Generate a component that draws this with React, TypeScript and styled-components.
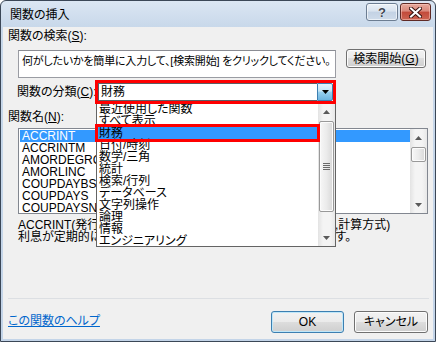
import React from 'react'
import styled, { createGlobalStyle, css } from 'styled-components'

const categories = [
  '最近使用した関数',
  'すべて表示',
  '財務',
  '日付/時刻',
  '数学/三角',
  '統計',
  '検索/行列',
  'データベース',
  '文字列操作',
  '論理',
  '情報',
  'エンジニアリング',
]

const functionNames = ['ACCRINT', 'ACCRINTM', 'AMORDEGRC', 'AMORLINC', 'COUPDAYBS', 'COUPDAYS', 'COUPDAYSNC', 'COUPNCD']

function ScrollBar({ thumbTop, thumbHeight }: { thumbTop: number; thumbHeight: number }) {
  return (
    <Bar>
      <ArrowButton>
        <svg width="7" height="4" viewBox="0 0 7 4">
          <path d="M0 4 L3.5 0 L7 4 Z" fill="#5a5a5a" />
        </svg>
      </ArrowButton>
      <Track>
        <Thumb style={{ marginTop: thumbTop, height: thumbHeight }}>
          {thumbHeight > 30 && <Grip />}
        </Thumb>
      </Track>
      <ArrowButton>
        <svg width="7" height="4" viewBox="0 0 7 4">
          <path d="M0 0 L7 0 L3.5 4 Z" fill="#5a5a5a" />
        </svg>
      </ArrowButton>
    </Bar>
  )
}

function App() {
  return (
    <>
      <GlobalStyle />
      <Window>
        <TitleBar>
          <Title>関数の挿入</Title>
          <CaptionButton $kind="help">
            <HelpGlyph>?</HelpGlyph>
          </CaptionButton>
          <CaptionButton $kind="close">
            <svg width="13" height="11" viewBox="0 0 13 11">
              <path d="M2 1.5 L11 9.5 M11 1.5 L2 9.5" stroke="#3b1512" strokeWidth="4" strokeLinecap="square" />
              <path d="M2 1.5 L11 9.5 M11 1.5 L2 9.5" stroke="#ffffff" strokeWidth="2" strokeLinecap="square" />
            </svg>
          </CaptionButton>
        </TitleBar>

        <Client>
          <Label>
            関数の検索(<u>S</u>):
          </Label>
          <SearchRow>
            <SearchBox>何がしたいかを簡単に入力して、[検索開始] をクリックしてください。</SearchBox>
            <Button $width={80} $height={19}>
              検索開始(<u>G</u>)
            </Button>
          </SearchRow>

          <CategoryRow>
            <CategoryLabel>
              関数の分類(<u>C</u>):
            </CategoryLabel>
            <ComboWrap>
              <Combo>
                <ComboValue>財務</ComboValue>
                <ComboButton>
                  <svg width="7" height="4" viewBox="0 0 7 4">
                    <path d="M0 0 L7 0 L3.5 4 Z" fill="#000" />
                  </svg>
                </ComboButton>
              </Combo>
              <DropList>
                <DropItems>
                  {categories.map((c) => (
                    <DropItem key={c} $selected={c === '財務'}>
                      {c}
                    </DropItem>
                  ))}
                </DropItems>
                <ScrollBar thumbTop={1} thumbHeight={91} />
              </DropList>
            </ComboWrap>
          </CategoryRow>

          <Label $top={6}>
            関数名(<u>N</u>):
          </Label>
          <FunctionList>
            <FunctionItems>
              {functionNames.map((f, i) => (
                <FunctionItem key={f} $selected={i === 0}>
                  {f}
                </FunctionItem>
              ))}
            </FunctionItems>
            <ScrollBar thumbTop={1} thumbHeight={15} />
          </FunctionList>

          <Description>
            <DescLine>ACCRINT(発行日,最初の利払日,受渡日,利率,額面,頻度,基準,計算方式)</DescLine>
            <DescLine>利息が定期的に支払われる有価証券の未収利息額を計算します。</DescLine>
          </Description>

          <Separator />

          <Footer>
            <HelpLink href="#">この関数のヘルプ</HelpLink>
            <Buttons>
              <Button $width={73} $height={22} $default>
                OK
              </Button>
              <Button $width={74} $height={22}>
                キャンセル
              </Button>
            </Buttons>
          </Footer>
        </Client>
      </Window>
    </>
  )
}

export default App

const GlobalStyle = createGlobalStyle`
  html, body {
    margin: 0;
    padding: 0;
    background: #ffffff;
  }
  body {
    font-family: 'Liberation Sans', 'Noto Sans CJK JP', sans-serif;
    font-size: 12px;
    color: #000;
    font-feature-settings: 'palt' 1;
  }
  * {
    box-sizing: border-box;
  }
`

const Window = styled.div`
  width: 436px;
  height: 342px;
  border: 1px solid #3b4757;
  border-radius: 6px 6px 0 0;
  background: linear-gradient(#dbe6f3 0, #c8d8ea 26px, #c3d4e8 100%);
  padding: 0 2px 2px 2px;
  display: flex;
  flex-direction: column;
  overflow: hidden;
`

const TitleBar = styled.div`
  height: 26px;
  display: flex;
  align-items: flex-start;
  padding: 2px 2px 0 7px;
`

const Title = styled.div`
  flex: 1;
  font-size: 12px;
  line-height: 14px;
  margin-top: 5px;
  color: #000;
`

const CaptionButton = styled.div<{ $kind: 'help' | 'close' }>`
  height: 18px;
  border-radius: 3px;
  display: flex;
  align-items: center;
  justify-content: center;
  ${(p) =>
    p.$kind === 'help'
      ? css`
          width: 32px;
          border: 1px solid #6c7d92;
          background: linear-gradient(#eaf0f7 0%, #d9e3ef 45%, #c3d2e4 50%, #cedbea 100%);
          box-shadow: inset 0 0 0 1px rgba(255, 255, 255, 0.6);
        `
      : css`
          width: 31px;
          margin-left: 2px;
          border: 1px solid #5f2a25;
          background: linear-gradient(#e6a99c 0%, #d9877a 45%, #c24a3a 50%, #cc6452 100%);
          box-shadow: inset 0 0 0 1px rgba(255, 210, 200, 0.5);
        `}
`

const HelpGlyph = styled.span`
  font-family: 'Liberation Sans', sans-serif;
  font-weight: bold;
  font-size: 13px;
  line-height: 13px;
  color: #3e4652;
  text-shadow: 0 0 1px #fff, 0 0 1px #fff;
`

const Client = styled.div`
  flex: 1;
  background: #f0f0f0;
  display: flex;
  flex-direction: column;
  padding: 0 4px 0 5px;
`

const Label = styled.div<{ $top?: number }>`
  line-height: 14px;
  height: 14px;
  margin-top: ${(p) => p.$top ?? 2}px;
  white-space: nowrap;
`

const SearchRow = styled.div`
  display: flex;
  align-items: flex-start;
  margin-top: 7px;
  padding-left: 10px;
`

const SearchBox = styled.div`
  width: 318px;
  height: 28px;
  background: #fff;
  border: 1px solid #9a9ca3;
  border-top-color: #8a8c93;
  padding: 3px 3px;
  font-size: 11px;
  letter-spacing: -0.2px;
  line-height: 14px;
  white-space: nowrap;
  overflow: hidden;
`

const Button = styled.div<{ $width: number; $height: number; $default?: boolean }>`
  width: ${(p) => p.$width}px;
  height: ${(p) => p.$height}px;
  border: 1px solid ${(p) => (p.$default ? '#3c7fb1' : '#707070')};
  border-radius: 3px;
  background: linear-gradient(#f2f2f2 0%, #ebebeb 49%, #dddddd 50%, #cfcfcf 100%);
  box-shadow: inset 0 0 0 1px ${(p) => (p.$default ? '#bfe7f9' : '#fcfcfc')};
  display: flex;
  align-items: center;
  justify-content: center;
  line-height: 14px;
  white-space: nowrap;
  ${SearchRow} & {
    margin-left: 10px;
    margin-top: -1px;
  }
`

const CategoryRow = styled.div`
  display: flex;
  align-items: center;
  margin-top: 2px;
  padding-left: 9px;
  position: relative;
  z-index: 5;
`

const CategoryLabel = styled.div`
  width: 78px;
  line-height: 14px;
  white-space: nowrap;
`

const ComboWrap = styled.div`
  position: relative;
  width: 241px;
  height: 24px;
`

const Combo = styled.div`
  position: relative;
  z-index: 2;
  height: 24px;
  border: 3px solid #ff0000;
  background: #fff;
  display: flex;
`

const ComboValue = styled.div`
  flex: 1;
  border: 1px solid #5b5f66;
  border-right: none;
  padding-left: 2px;
  line-height: 16px;
`

const ComboButton = styled.div`
  width: 16px;
  border: 1px solid #3c7fb1;
  border-radius: 0 2px 2px 0;
  background: linear-gradient(#e5f4fc 0%, #c4e5f6 45%, #98d1ef 50%, #6cb4e0 100%);
  display: flex;
  align-items: center;
  justify-content: center;
`

const DropList = styled.div`
  position: absolute;
  z-index: 1;
  left: 1px;
  top: 22px;
  width: 240px;
  height: 145px;
  border: 1px solid #646464;
  background: #fff;
  display: flex;
`

const DropItems = styled.div`
  flex: 1;
  padding-top: 0;
  overflow: visible;
`

const DropItem = styled.div<{ $selected?: boolean }>`
  height: 12px;
  line-height: 12px;
  padding-left: 2px;
  white-space: nowrap;
  position: relative;
  ${(p) =>
    p.$selected &&
    css`
      background: #3399ff;
      color: #000;
      &::after {
        content: '';
        position: absolute;
        top: -3px;
        bottom: -3px;
        left: -2px;
        right: -2px;
        border: 3px solid #ff0000;
        z-index: 3;
      }
    `}
`

const Bar = styled.div`
  width: 17px;
  display: flex;
  flex-direction: column;
  background: linear-gradient(90deg, #e3e3e3 0%, #f4f4f4 30%, #f4f4f4 70%, #e8e8e8 100%);
`

const ArrowButton = styled.div`
  height: 17px;
  display: flex;
  align-items: center;
  justify-content: center;
  flex-shrink: 0;
`

const Track = styled.div`
  flex: 1;
  padding: 0 1px;
`

const Thumb = styled.div`
  border: 1px solid #999999;
  border-radius: 2px;
  background: linear-gradient(90deg, #f7f7f7 0%, #ebebeb 50%, #d8d8d8 100%);
  box-shadow: inset 0 0 0 1px #fbfbfb;
  display: flex;
  align-items: center;
  justify-content: center;
`

const Grip = styled.div`
  width: 7px;
  height: 7px;
  background: repeating-linear-gradient(#6a6a6a 0, #6a6a6a 1px, transparent 1px, transparent 2px);
`

const FunctionList = styled.div`
  margin-top: 4px;
  margin-left: 10px;
  width: 410px;
  height: 86px;
  border: 1px solid #828790;
  background: #fff;
  display: flex;
  overflow: hidden;
`

const FunctionItems = styled.div`
  flex: 1;
  padding: 1px 0 0 1px;
`

const FunctionItem = styled.div<{ $selected?: boolean }>`
  height: 12px;
  line-height: 12px;
  padding-left: 2px;
  white-space: nowrap;
  background: ${(p) => (p.$selected ? '#3399ff' : 'transparent')};
  color: ${(p) => (p.$selected ? '#fff' : '#000')};
`

const Description = styled.div`
  margin-top: 5px;
  padding-left: 10px;
`

const DescLine = styled.div`
  line-height: 12px;
  white-space: nowrap;
`

const Separator = styled.div`
  margin-top: 55px;
  height: 1px;
  background: #dcdfe3;
`

const Footer = styled.div`
  display: flex;
  align-items: flex-start;
  margin-top: 12px;
`

const HelpLink = styled.a`
  flex: 1;
  margin-top: 3px;
  color: #0066cc;
  text-decoration: underline;
  line-height: 14px;
`

const Buttons = styled.div`
  display: flex;
  gap: 10px;
  margin-right: 1px;
`
